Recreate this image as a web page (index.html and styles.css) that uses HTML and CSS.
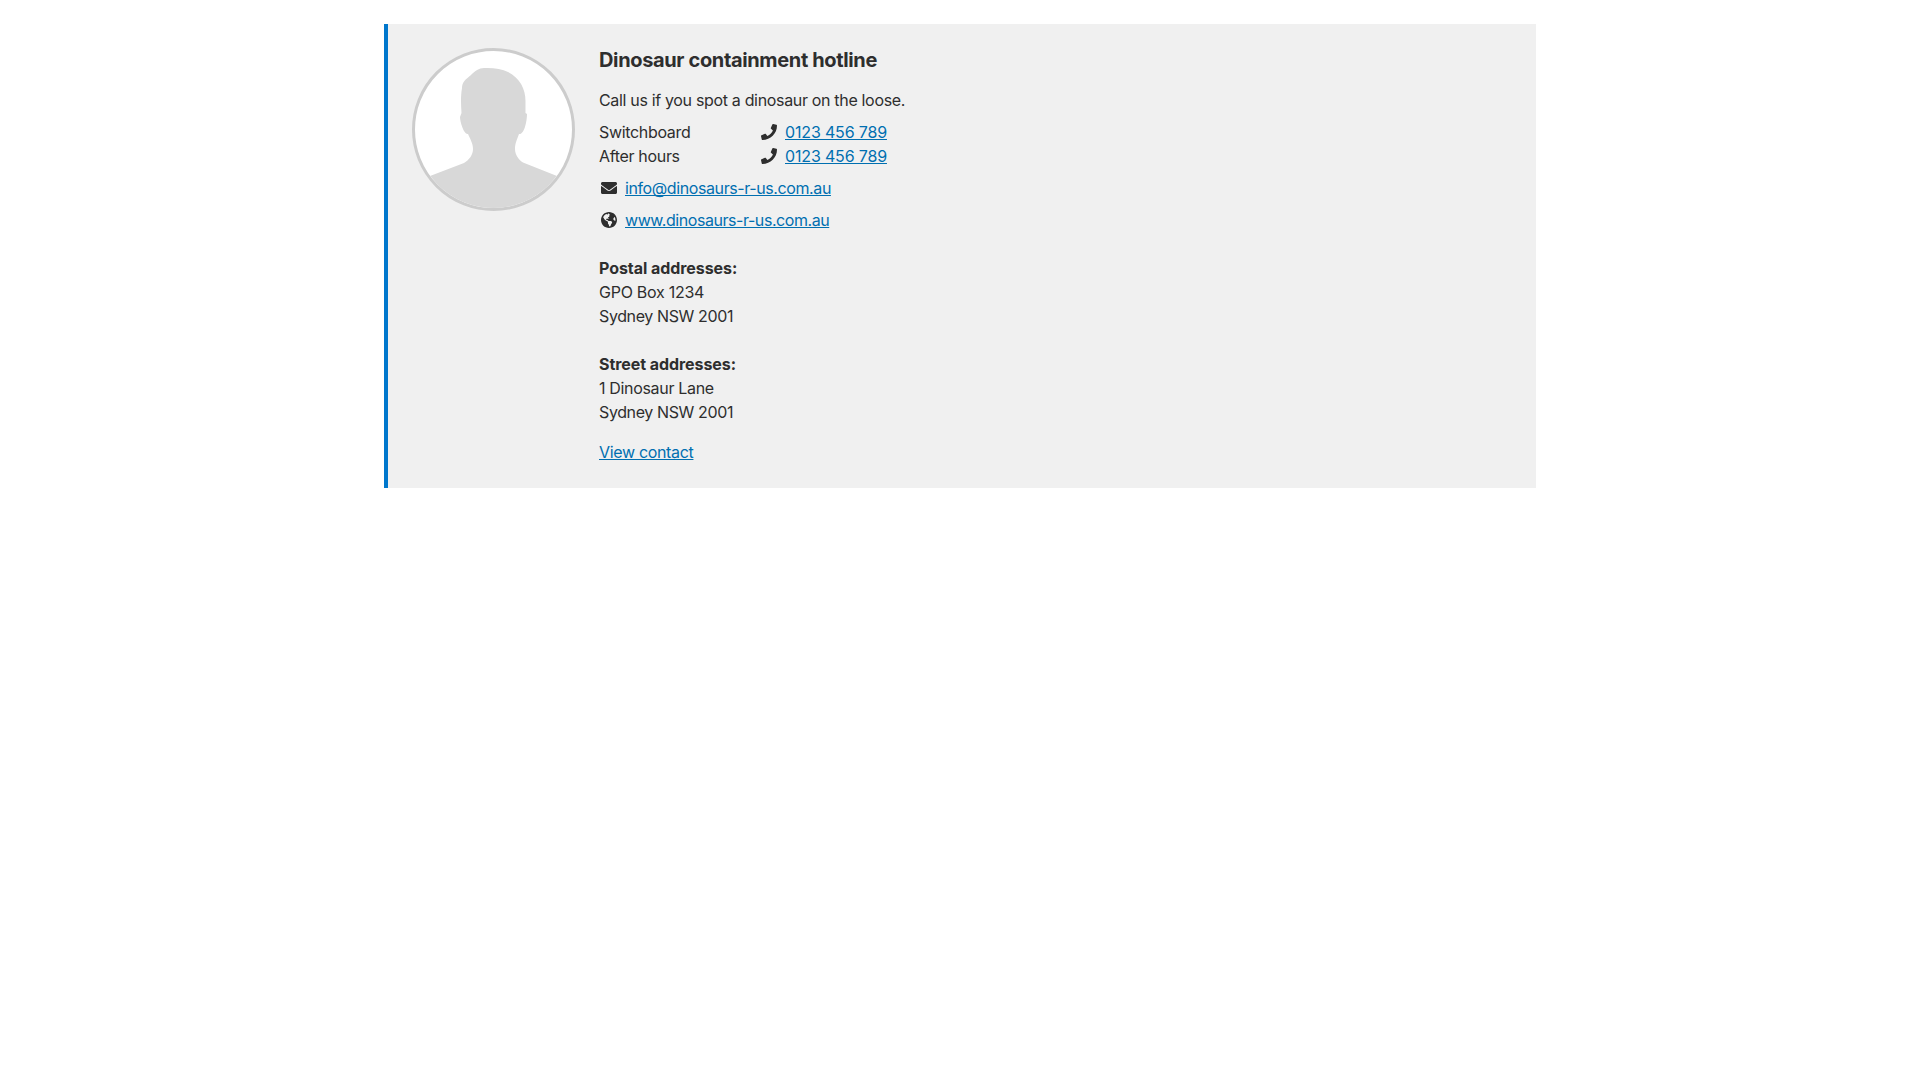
FILE: index.html
```html
<!DOCTYPE html>
<html lang="en">
<head>
<meta charset="utf-8">
<title>Dinosaur containment hotline</title>
<link rel="stylesheet" href="styles.css">
</head>
<body>
<svg class="sprite" width="0" height="0" aria-hidden="true">
  <symbol id="phone" viewBox="0 0 512 512"><path d="M493.4 24.6l-104-24c-11.3-2.6-22.9 3.3-27.5 13.9l-48 112c-4.2 9.8-1.4 21.3 6.9 28l60.6 49.6c-36 76.7-98.9 140.5-177.2 177.2l-49.6-60.6c-6.8-8.3-18.2-11.1-28-6.9l-112 48C3.9 366.5-2 378.1.6 389.4l24 104C27.1 504.2 36.7 512 48 512c256.1 0 464-207.5 464-464 0-11.2-7.7-20.9-18.6-23.4z"/></symbol>
</svg>
<section class="card">
  <div class="card-image">
    <svg class="avatar" viewBox="0 0 157 157" aria-hidden="true">
      <path d="M69 17C78 16.500 87 18 93 21C105 27 110.500 38 110.500 50V62L112 63C112 71 109 84 104 83C102 89 100 92 100 98C100 104 104 109 108 111.500L142 125L160 132V157H0V131L15 125L49 112C54 109 58 104 58 98C58 92 55 88 53 83C49 84 45 71 45 66L46.500 62C46 54 45.500 46 47 37C47 31 51 28 56 24C60 20 64 17 69 17Z"/>
    </svg>
  </div>
  <div class="content">
    <h1 class="title">Dinosaur containment hotline</h1>
    <p class="intro">Call us if you spot a dinosaur on the loose.</p>
    <ul class="phones">
      <li class="phone-row"><span class="label">Switchboard</span><svg class="icon"><use href="#phone"/></svg><a class="link number" href="#">0123 456 789</a></li>
      <li class="phone-row"><span class="label">After hours</span><svg class="icon"><use href="#phone"/></svg><a class="link number" href="#">0123 456 789</a></li>
    </ul>
    <div class="contact-row">
      <svg class="icon" viewBox="0 0 512 512"><path d="M502.300 190.800c3.900-3.100 9.700-.2 9.700 4.700V400c0 26.500-21.500 48-48 48H48c-26.500 0-48-21.500-48-48V195.600c0-5 5.700-7.800 9.700-4.700 22.400 17.400 52.100 39.500 154.100 113.600 21.100 15.400 56.700 47.800 92.200 47.600 35.700.3 72-32.800 92.300-47.600 102-74.100 131.600-96.300 154-113.700zM256 320c23.200.4 56.600-29.200 73.400-41.400 132.700-96.300 142.800-104.700 173.400-128.700 5.800-4.500 9.200-11.500 9.200-18.900v-19c0-26.500-21.500-48-48-48H48c-26.500 0-48 21.500-48 48v19c0 7.400 3.400 14.300 9.200 18.900 30.600 23.900 40.700 32.400 173.400 128.700 16.800 12.200 50.200 41.800 73.400 41.400z"/></svg>
      <a class="link email" href="#">info@dinosaurs-r-us.com.au</a>
    </div>
    <div class="contact-row">
      <svg class="icon" viewBox="0 8 496 496"><path d="M248 8C111.03 8 0 119.03 0 256s111.03 248 248 248 248-111.03 248-248S384.97 8 248 8zm82.29 357.6c-3.9 3.88-7.99 7.95-11.31 11.28-2.99 3-5.1 6.7-6.17 10.71-1.51 5.66-2.73 11.38-4.77 16.87l-17.39 46.85c-13.76 3-28 4.69-42.65 4.69v-27.38c1.69-12.62-7.64-36.26-22.63-51.25-6-6-9.37-14.14-9.37-22.63v-32.01c0-11.64-6.27-22.34-16.46-27.97-14.37-7.95-34.81-19.06-48.81-26.11-11.48-5.78-22.1-13.14-31.65-21.75l-.8-.72a114.792 114.792 0 0 1-18.06-20.74c-9.38-13.77-24.66-36.42-34.59-51.14 20.47-45.5 57.36-82.04 103.2-101.89l24.01 12.01C203.48 89.74 216 82.01 216 70.11v-11.3c7.99-1.29 16.12-2.11 24.39-2.42l28.3 28.3c6.25 6.25 6.25 16.38 0 22.63L264 112l-10.34 10.34c-3.12 3.12-3.12 8.19 0 11.31l4.69 4.69c3.12 3.12 3.12 8.19 0 11.31l-8 8a8.008 8.008 0 0 1-5.66 2.34h-8.99c-2.08 0-4.08.81-5.58 2.27l-9.92 9.65a8.008 8.008 0 0 0-1.58 9.31l15.59 31.19c2.66 5.32-1.21 11.58-7.15 11.58h-5.64c-1.93 0-3.79-.7-5.24-1.96l-9.28-8.06a16.017 16.017 0 0 0-15.55-3.1l-31.17 10.39a11.95 11.95 0 0 0-8.17 11.34c0 4.53 2.56 8.66 6.61 10.69l11.08 5.54c9.41 4.71 19.79 7.16 30.31 7.16s22.59 27.29 32 32h66.75c8.49 0 16.62 3.37 22.63 9.37l13.69 13.69a30.503 30.503 0 0 1 8.93 21.57 46.536 46.536 0 0 1-13.72 32.98zM417 274.25c-5.79-1.45-10.84-5-14.15-9.97l-17.98-26.97a23.97 23.97 0 0 1 0-26.62l19.59-29.38c2.32-3.47 5.5-6.29 9.24-8.15l12.98-6.49C440.2 193.59 448 223.87 448 256c0 8.67-.74 17.16-1.82 25.54L417 274.25z"/></svg>
      <a class="link web" href="#">www.dinosaurs-r-us.com.au</a>
    </div>
    <address class="address"><strong class="heading">Postal addresses:</strong><span class="box">GPO Box 1234</span><span class="city">Sydney NSW 2001</span></address>
    <address class="address"><strong class="heading">Street addresses:</strong><span>1 Dinosaur Lane</span><span class="city">Sydney NSW 2001</span></address>
    <a class="link view" href="#">View contact</a>
  </div>
</section>
</body>
</html>
```
FILE: styles.css
```css
* { box-sizing: border-box; }
body {
  margin: 0;
  background: #fff;
  color: #2e2e2e;
  font: 16px/24px Inter, "Liberation Sans", sans-serif;
  letter-spacing: -0.33px;
}
.sprite { display: block; }
.card {
  width: 1152px;
  margin: 24px auto 0;
  padding: 24px;
  display: flex;
  align-items: flex-start;
  gap: 24px;
  border-left: 4px solid #0077cc;
  background: #f0f0f0;
}
.card-image {
  flex: none;
  width: 163px;
  height: 163px;
  border: 3px solid #ccc;
  border-radius: 50%;
  overflow: hidden;
  background: #fff;
}
.avatar { display: block; width: 157px; height: 157px; fill: #d8d8d8; }
.title { margin: 0; font-size: 20px; line-height: 24px; font-weight: 700; letter-spacing: -0.36px; }
.intro { margin: 16px 0 8px; }
.phones { margin: 0 0 8px; padding: 0; list-style: none; }
.phone-row { display: flex; align-items: center; }
.label { width: 162px; }
.icon { flex: none; width: 16px; height: 16px; margin-right: 8px; fill: #2e2e2e; }
.contact-row { display: flex; align-items: center; margin-bottom: 8px; padding-left: 2px; }
.link {
  color: #006fb0;
  text-decoration: underline;
  text-decoration-thickness: 1px;
  text-decoration-skip-ink: none;
  text-underline-offset: 1px;
}
.number { letter-spacing: -0.16px; }
.email { letter-spacing: -0.4px; }
.web { letter-spacing: -0.44px; }
.address { display: flex; flex-direction: column; margin-top: 24px; font-style: normal; }
.heading { font-weight: 700; letter-spacing: -0.06px; }
.box { letter-spacing: -0.26px; }
.city { letter-spacing: -0.38px; }
.view { display: inline-block; margin-top: 16px; }
```
